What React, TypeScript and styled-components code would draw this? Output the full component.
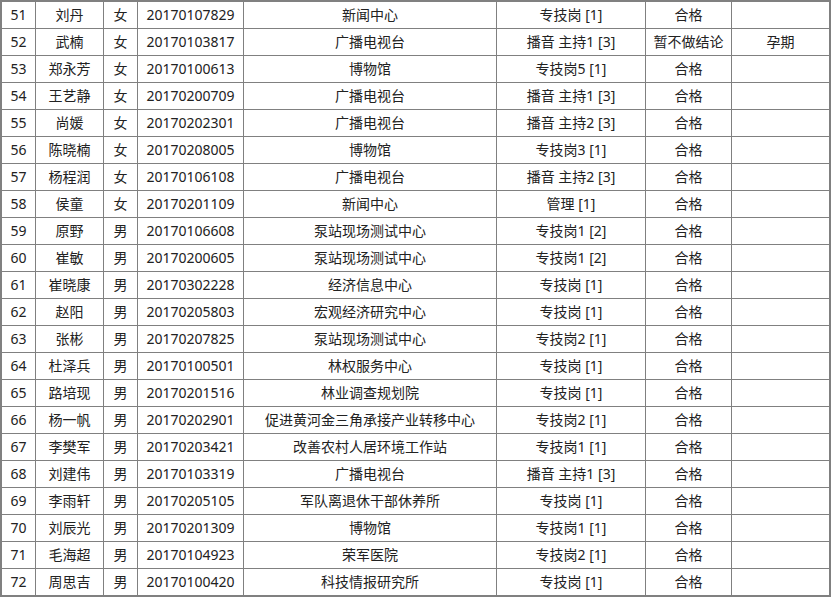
import { Fragment } from "react";
import styled, { createGlobalStyle } from "styled-components";

type Row = {
  no: number;
  name: string;
  sex: string;
  ticket: string;
  unit: string;
  post: string;
  result: string;
  note?: string;
};

const rows: Row[] = [
  { no: 51, name: "刘丹", sex: "女", ticket: "20170107829", unit: "新闻中心", post: "专技岗 [1]", result: "合格" },
  { no: 52, name: "武楠", sex: "女", ticket: "20170103817", unit: "广播电视台", post: "播音 主持1 [3]", result: "暂不做结论", note: "孕期" },
  { no: 53, name: "郑永芳", sex: "女", ticket: "20170100613", unit: "博物馆", post: "专技岗5 [1]", result: "合格" },
  { no: 54, name: "王艺静", sex: "女", ticket: "20170200709", unit: "广播电视台", post: "播音 主持1 [3]", result: "合格" },
  { no: 55, name: "尚媛", sex: "女", ticket: "20170202301", unit: "广播电视台", post: "播音 主持2 [3]", result: "合格" },
  { no: 56, name: "陈晓楠", sex: "女", ticket: "20170208005", unit: "博物馆", post: "专技岗3 [1]", result: "合格" },
  { no: 57, name: "杨程润", sex: "女", ticket: "20170106108", unit: "广播电视台", post: "播音 主持2 [3]", result: "合格" },
  { no: 58, name: "侯童", sex: "女", ticket: "20170201109", unit: "新闻中心", post: "管理 [1]", result: "合格" },
  { no: 59, name: "原野", sex: "男", ticket: "20170106608", unit: "泵站现场测试中心", post: "专技岗1 [2]", result: "合格" },
  { no: 60, name: "崔敏", sex: "男", ticket: "20170200605", unit: "泵站现场测试中心", post: "专技岗1 [2]", result: "合格" },
  { no: 61, name: "崔晓康", sex: "男", ticket: "20170302228", unit: "经济信息中心", post: "专技岗 [1]", result: "合格" },
  { no: 62, name: "赵阳", sex: "男", ticket: "20170205803", unit: "宏观经济研究中心", post: "专技岗 [1]", result: "合格" },
  { no: 63, name: "张彬", sex: "男", ticket: "20170207825", unit: "泵站现场测试中心", post: "专技岗2 [1]", result: "合格" },
  { no: 64, name: "杜泽兵", sex: "男", ticket: "20170100501", unit: "林权服务中心", post: "专技岗 [1]", result: "合格" },
  { no: 65, name: "路培现", sex: "男", ticket: "20170201516", unit: "林业调查规划院", post: "专技岗 [1]", result: "合格" },
  { no: 66, name: "杨一帆", sex: "男", ticket: "20170202901", unit: "促进黄河金三角承接产业转移中心", post: "专技岗2 [1]", result: "合格" },
  { no: 67, name: "李樊军", sex: "男", ticket: "20170203421", unit: "改善农村人居环境工作站", post: "专技岗1 [1]", result: "合格" },
  { no: 68, name: "刘建伟", sex: "男", ticket: "20170103319", unit: "广播电视台", post: "播音 主持1 [3]", result: "合格" },
  { no: 69, name: "李雨轩", sex: "男", ticket: "20170205105", unit: "军队离退休干部休养所", post: "专技岗 [1]", result: "合格" },
  { no: 70, name: "刘辰光", sex: "男", ticket: "20170201309", unit: "博物馆", post: "专技岗1 [1]", result: "合格" },
  { no: 71, name: "毛海超", sex: "男", ticket: "20170104923", unit: "荣军医院", post: "专技岗2 [1]", result: "合格" },
  { no: 72, name: "周思吉", sex: "男", ticket: "20170100420", unit: "科技情报研究所", post: "专技岗 [1]", result: "合格" },
];

const GlobalStyle = createGlobalStyle`
  html, body {
    margin: 0;
    padding: 0;
    background: #fff;
  }
  body {
    font-family: "Noto Sans", "Noto Sans CJK SC", sans-serif;
    font-size: 14px;
    color: #222;
  }
`;

// grid lines are the gray background showing through 1px gaps
const Sheet = styled.div`
  display: grid;
  grid-template-columns: 33px 67px 33px 105px 252px 148px 85px 97px;
  grid-auto-rows: 26px;
  gap: 1px;
  padding: 2px;
  width: max-content;
  background: #808080;
`;

const Cell = styled.div`
  background: #fff;
  display: flex;
  align-items: center;
  justify-content: center;
  white-space: nowrap;
  line-height: 1;
`;

export default function App() {
  return (
    <>
      <GlobalStyle />
      <Sheet>
        {rows.map((r) => (
          <Fragment key={r.no}>
            <Cell>{r.no}</Cell>
            <Cell>{r.name}</Cell>
            <Cell>{r.sex}</Cell>
            <Cell>{r.ticket}</Cell>
            <Cell>{r.unit}</Cell>
            <Cell>{r.post}</Cell>
            <Cell>{r.result}</Cell>
            <Cell>{r.note ?? ""}</Cell>
          </Fragment>
        ))}
      </Sheet>
    </>
  );
}
